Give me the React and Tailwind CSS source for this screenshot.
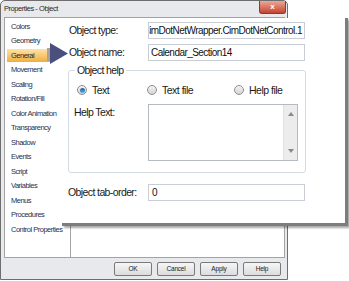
import React from 'react';

const FONT = { fontFamily: '"Liberation Sans", Arial, sans-serif' };

const items = [
  'Colors',
  'Geometry',
  'General',
  'Movement',
  'Scaling',
  'Rotation/Fill',
  'Color Animation',
  'Transparency',
  'Shadow',
  'Events',
  'Script',
  'Variables',
  'Menus',
  'Procedures',
  'Control Properties',
];

function Radio({ checked, label, className }) {
  return (
    <div className={`flex items-center gap-[5px] ${className}`}>
      <span className="w-[10px] h-[10px] rounded-full border border-[#8e8f8f] bg-gradient-to-b from-[#f4f4f4] to-[#d4d4d4] flex items-center justify-center">
        {checked && <span className="w-[5px] h-[5px] rounded-full bg-gradient-to-b from-[#1c5a99] to-[#5cb0ec]"></span>}
      </span>
      <span className="text-[10.5px] tracking-[-0.5px] text-[#1a1a1a] leading-none">{label}</span>
    </div>
  );
}

function Field({ children, className = '' }) {
  return (
    <div className={`w-[157px] h-[17px] border border-[#c9ced6] bg-white flex items-center overflow-hidden text-[10px] tracking-[-0.55px] text-[#111] whitespace-nowrap ${className}`}>
      {children}
    </div>
  );
}

function DialogButton({ label }) {
  return (
    <div className="w-[38px] h-[14px] rounded-[2px] border border-[#7a7a7a] bg-gradient-to-b from-[#f6f6f6] to-[#dcdcdc] flex items-center justify-center text-[6.5px] tracking-[-0.2px] text-[#222]">
      {label}
    </div>
  );
}

export default function App() {
  return (
    <div className="relative w-[349px] h-[281px] bg-white overflow-hidden" style={FONT}>
      {/* Background dialog */}
      <div className="w-[288px] h-[280px] border border-[#6e6e6e] rounded-t-[5px] bg-[#e7e9ec] flex flex-col">
        {/* Title bar */}
        <div className="h-[16px] flex items-start justify-between pl-[3px] pr-[1px]">
          <span className="text-[7.5px] tracking-[-0.45px] text-[#2a2a2a] mt-[4px] leading-none">Properties - Object</span>
          <div className="w-[27px] h-[13px] rounded-b-[3px] border border-[#8a3b30] border-t-0 bg-gradient-to-b from-[#e9a998] to-[#c4412e] flex items-center justify-center text-white text-[8px] font-bold leading-none">
            x
          </div>
        </div>
        {/* Body */}
        <div className="flex h-[241px] pl-[3px] pr-[2px]">
          <div className="w-[67px] border border-[#a3a3a3] bg-white pt-[1px] flex flex-col">
            {items.map((item) => (
              <div key={item} className="h-[14.5px] flex items-center">
                <div
                  className={`h-[13px] flex items-center pl-[4px] ml-[2px] ${
                    item === 'General'
                      ? 'w-[44px] bg-gradient-to-b from-[#fde3a4] to-[#f1ad3a] text-[#2a2a2a]'
                      : 'text-[#27304f]'
                  }`}
                >
                  <span className="text-[7.5px] tracking-[-0.5px] whitespace-nowrap">{item}</span>
                </div>
              </div>
            ))}
          </div>
          <div className="flex-1 bg-white border border-l-0 border-[#a3a3a3]"></div>
        </div>
        {/* Buttons */}
        <div className="flex-1 flex items-center justify-end gap-[5px] pr-[6px]">
          <DialogButton label="OK" />
          <DialogButton label="Cancel" />
          <DialogButton label="Apply" />
          <DialogButton label="Help" />
        </div>
      </div>

      {/* Zoomed callout panel */}
      <div className="absolute left-[62px] top-[18px] w-[286px] h-[208px] bg-white border-r-[3px] border-b-[3px] border-[#7d7d7d] shadow-[2px_2px_2px_rgba(0,0,0,0.35)] pl-[6px] pt-[4px] flex flex-col">
        <div className="flex items-center h-[17px]">
          <span className="w-[80px] pl-[1px] text-[10.5px] tracking-[-0.6px] text-[#1a1a1a]">Object type:</span>
          <Field className="justify-end pr-[2px]">CimDotNetWrapper.CimDotNetControl.1</Field>
        </div>
        <div className="flex items-center h-[17px] mt-[5px]">
          <span className="w-[80px] pl-[1px] text-[10.5px] tracking-[-0.6px] text-[#1a1a1a]">Object name:</span>
          <Field className="pl-[2px]">Calendar_Section14</Field>
        </div>

        {/* Object help group */}
        <div className="relative mt-[9px] w-[238px] h-[103px] border border-[#d5dbe2] rounded-[3px]">
          <span className="absolute -top-[8px] left-[6px] bg-white px-[2px] text-[10.5px] tracking-[-0.6px] text-[#1a1a1a] leading-[14px]">Object help</span>
          <div className="flex items-center mt-[14px] pl-[8px]">
            <Radio checked label="Text" className="w-[70px]" />
            <Radio label="Text file" className="w-[87px]" />
            <Radio label="Help file" />
          </div>
          <div className="flex mt-[8px]">
            <span className="w-[79px] pl-[5px] pt-[1px] text-[10.5px] tracking-[-0.6px] text-[#1a1a1a]">Help Text:</span>
            <div className="w-[150px] h-[57px] border border-[#b5bac2] bg-white flex justify-end">
              <div className="w-[14px] h-full bg-[#ececec] border-l border-[#e0e0e0] flex flex-col items-center justify-between py-[7px]">
                <svg width="6" height="4" viewBox="0 0 6 4"><path d="M0 4 L3 0 L6 4 Z" fill="#8a8a8a" /></svg>
                <svg width="6" height="4" viewBox="0 0 6 4"><path d="M0 0 L3 4 L6 0 Z" fill="#8a8a8a" /></svg>
              </div>
            </div>
          </div>
        </div>

        <div className="flex items-center h-[17px] mt-[11px]">
          <span className="w-[80px] text-[10.5px] tracking-[-0.6px] text-[#1a1a1a] whitespace-nowrap">Object tab-order:</span>
          <Field className="pl-[3px]">0</Field>
        </div>
      </div>

      {/* Pointer arrow */}
      <svg className="absolute left-[47px] top-[43px]" width="22" height="21" viewBox="0 0 22 21">
        <rect x="0" y="5" width="4" height="13" fill="#a8a29a" />
        <path d="M3 0 L21 10.5 L3 21 Z" fill="#4b4f7e" />
      </svg>
    </div>
  );
}
